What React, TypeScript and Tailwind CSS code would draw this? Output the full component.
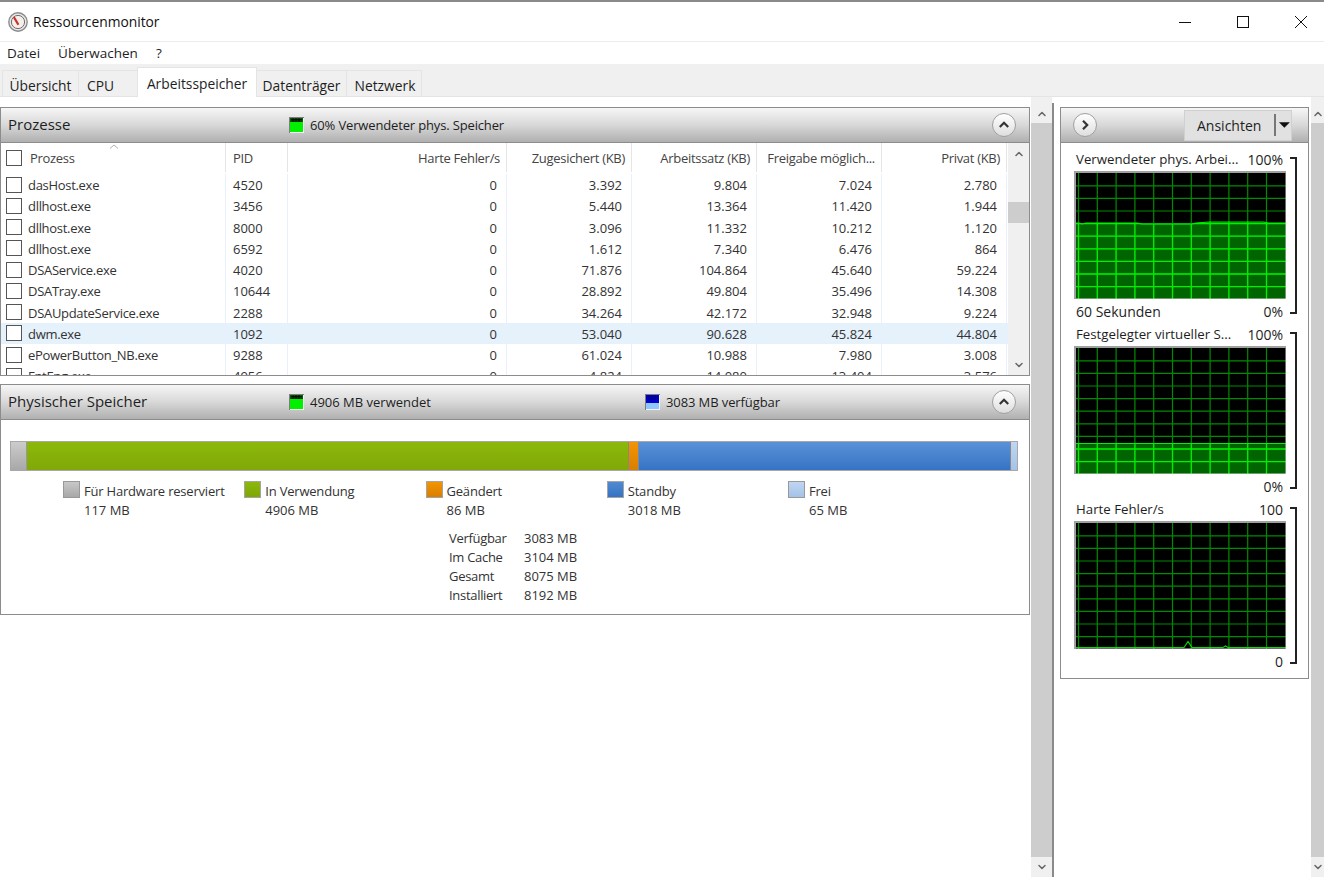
import { ChevronUp, ChevronDown } from 'lucide-react'

const rows = [
  ['dasHost.exe', '4520', '0', '3.392', '9.804', '7.024', '2.780'],
  ['dllhost.exe', '3456', '0', '5.440', '13.364', '11.420', '1.944'],
  ['dllhost.exe', '8000', '0', '3.096', '11.332', '10.212', '1.120'],
  ['dllhost.exe', '6592', '0', '1.612', '7.340', '6.476', '864'],
  ['DSAService.exe', '4020', '0', '71.876', '104.864', '45.640', '59.224'],
  ['DSATray.exe', '10644', '0', '28.892', '49.804', '35.496', '14.308'],
  ['DSAUpdateService.exe', '2288', '0', '34.264', '42.172', '32.948', '9.224'],
  ['dwm.exe', '1092', '0', '53.040', '90.628', '45.824', '44.804'],
  ['ePowerButton_NB.exe', '9288', '0', '61.024', '10.988', '7.980', '3.008'],
  ['FntEng.exe', '4956', '0', '4.824', '14.080', '13.404', '3.576'],
]

const legend = [
  ['Für Hardware reserviert', '117 MB', 'from-[#c8c8c8] to-[#a8a8a8]', 'border-[#999999]'],
  ['In Verwendung', '4906 MB', 'from-[#8cb80a] to-[#7ea606]', 'border-[#a5a5a5]'],
  ['Geändert', '86 MB', 'from-[#f49400] to-[#d87f00]', 'border-[#a5a5a5]'],
  ['Standby', '3018 MB', 'from-[#4f8ad2] to-[#3573c4]', 'border-[#a5a5a5]'],
  ['Frei', '65 MB', 'from-[#c0d6f2] to-[#a4c2e8]', 'border-[#999999]'],
]

const stats = [
  ['Verfügbar', '3083 MB'],
  ['Im Cache', '3104 MB'],
  ['Gesamt', '8075 MB'],
  ['Installiert', '8192 MB'],
]

function AppIcon() {
  return (
    <svg width="20" height="20" viewBox="0 0 20 20" className="shrink-0">
      <circle cx="10" cy="10" r="9.2" fill="#e8e8e8" stroke="#8c8c8c" strokeWidth="1.4" />
      <circle cx="10" cy="10" r="6.6" fill="#f7efe9" stroke="#6e6e6e" strokeWidth="1" />
      <path d="M5.8 5 L10.4 12.8" stroke="#c9302c" strokeWidth="2.2" />
    </svg>
  )
}

function Meter({ blue }: { blue?: boolean }) {
  return (
    <svg width="15" height="16" viewBox="0 0 15 16" className="shrink-0">
      <rect x="0" y="0" width="15" height="16" fill="#f4f4f4" />
      <rect x="0" y="0" width="1" height="16" fill="#7d7d7d" />
      <rect x="1" y="0" width="14" height="1" fill="#7d7d7d" />
      <rect x="1" y="1" width="13" height="14" fill={blue ? '#8cc8ff' : '#00f000'} />
      <rect x="1" y="1" width="13" height={blue ? 8 : 4} fill={blue ? '#0000c8' : '#0a5a0a'} />
      <path
        d={blue ? 'M2 3 H13 M2 5 H13 M4 1 V6 M7 1 V6 M10 1 V6' : 'M2 2.5 H13 M2 4 H13 M4 1 V5 M7 1 V5 M10 1 V5'}
        stroke={blue ? '#00007a' : '#000000'}
        strokeWidth="0.7"
      />
    </svg>
  )
}

function RoundButton({ dir }: { dir: 'up' | 'right' }) {
  return (
    <div className="w-[24px] h-[24px] rounded-full border border-[#a0a0a0] bg-gradient-to-b from-[#ffffff] to-[#dedede] flex items-center justify-center shrink-0">
      <svg width="12" height="12" viewBox="0 0 12 12">
        <path
          d={dir === 'up' ? 'M1.8 8 L6 3.8 L10.2 8' : 'M4 1.8 L8.2 6 L4 10.2'}
          fill="none"
          stroke="#333333"
          strokeWidth="2.2"
        />
      </svg>
    </div>
  )
}

function CheckBox() {
  return <div className="w-[16px] h-[16px] border border-[#555555] bg-white shrink-0" />
}

function Graph({ id, level, spikes }: { id: string; level?: string; spikes?: boolean }) {
  const w = 212
  const h = 128
  const vs = Array.from({ length: 11 }, (_, i) => 4.5 + i * 18.8)
  const hs = Array.from({ length: 9 }, (_, i) => 14.8 + i * 12.6)
  return (
    <svg width={w} height={h} viewBox={`0 0 ${w} ${h}`} className="block">
      <rect width={w} height={h} fill="#000000" />
      {level && <path d={`${level} L${w} ${h} L0 ${h} Z`} fill="#006400" />}
      {vs.map((x) => (
        <line key={x} x1={x} x2={x} y1={0} y2={h} stroke="#008c00" strokeWidth="1.2" />
      ))}
      {hs.map((y) => (
        <line key={y} x1={0} x2={w} y1={y} y2={y} stroke="#008c00" strokeWidth="1.2" />
      ))}
      {level && (
        <g>
          <clipPath id={id}>
            <path d={`${level} L${w} ${h} L0 ${h} Z`} />
          </clipPath>
          <g clipPath={`url(#${id})`}>
            {vs.map((x) => (
              <line key={x} x1={x} x2={x} y1={0} y2={h} stroke="#00f000" strokeWidth="1.3" />
            ))}
            {hs.map((y) => (
              <line key={y} x1={0} x2={w} y1={y} y2={y} stroke="#00f000" strokeWidth="1.3" />
            ))}
          </g>
          <path d={level} fill="none" stroke="#00f000" strokeWidth="1.2" />
        </g>
      )}
      {spikes && (
        <path
          d="M0 126.5 H110 L114 120.5 L118 126.5 H149 L151.5 125 L154 126.5 H212"
          fill="none"
          stroke="#00e000"
          strokeWidth="1.2"
        />
      )}
      <path d="M1 128 V1 H212" fill="none" stroke="#a0a0a0" strokeWidth="2" />
      <path d="M2 127.5 H212 M211.5 2 V128" fill="none" stroke="#d8d8d8" strokeWidth="1" opacity="0.5" />
    </svg>
  )
}

function ChartBlock({
  id,
  title,
  max,
  min,
  footer,
  level,
  spikes,
}: {
  id: string
  title: string
  max: string
  min: string
  footer?: string
  level?: string
  spikes?: boolean
}) {
  return (
    <div className="relative">
      <div className="h-[22px] flex justify-between items-center pl-[2px] pr-[3px] w-[212px] whitespace-nowrap">
        <span className="text-[13.25px]">{title}</span>
        <span className="text-[14px]">{max}</span>
      </div>
      <Graph id={id} level={level} spikes={spikes} />
      <div className="h-[25px] flex justify-between items-center text-[14px] pl-[2px] pr-[3px] w-[212px]">
        <span>{footer}</span>
        <span>{min}</span>
      </div>
      {/* bracket next to the chart */}
      <div className="absolute left-[216px] top-[8px] bottom-[10px] w-[7px] border-t-2 border-r-2 border-b-2 border-[#222222]" />
    </div>
  )
}

function PanelHeader({ children }: { children: React.ReactNode }) {
  return (
    <div className="h-[35px] shrink-0 relative flex items-center bg-gradient-to-b from-[#f6f6f6] via-[#d8d8d8] to-[#b0b0b0] border-b border-[#8c8c8c]">
      {children}
    </div>
  )
}

function Scrollbar({ wide }: { wide?: boolean }) {
  return (
    <div className={`${wide ? 'w-[21px]' : 'w-[13px]'} h-full flex flex-col bg-[#f0f0f0] shrink-0`}>
      <div className="h-[26px] flex items-end justify-center pb-[3px] shrink-0">
        <ChevronUp size={12} strokeWidth={3} color="#666666" />
      </div>
      <div className="flex-1 bg-[#cdcdcd]" />
      <div className="h-[20px] flex items-center justify-center shrink-0">
        <ChevronDown size={12} strokeWidth={3} color="#666666" />
      </div>
    </div>
  )
}

const colClass = [
  'w-[225px] border-r',
  'w-[62px] border-r',
  'w-[219px] border-r text-right',
  'w-[125px] border-r text-right',
  'w-[125px] border-r text-right',
  'w-[125px] border-r text-right',
  'w-[125px] border-r text-right',
]

const heads = ['Prozess', 'PID', 'Harte Fehler/s', 'Zugesichert (KB)', 'Arbeitssatz (KB)', 'Freigabe möglich...', 'Privat (KB)']

export default function App() {
  return (
    <div
      className="w-[1324px] h-[877px] overflow-hidden bg-white flex flex-col text-[#1e1e1e] text-[14px] leading-none"
      style={{ fontFamily: '"Open Sans", "Noto Sans", sans-serif' }}
    >
      <div className="h-[2px] bg-[#8a8a8a] shrink-0" />
      {/* title bar */}
      <div className="h-[40px] shrink-0 flex items-center pl-[8px] border-b border-[#ececec]">
        <AppIcon />
        <span className="ml-[5px] text-[13.8px] text-[#111111]">Ressourcenmonitor</span>
        <div className="ml-auto flex items-center">
          <svg width="58" height="16" viewBox="0 0 58 16"><path d="M23 8.5 H35" stroke="#111111" strokeWidth="1" /></svg>
          <svg width="58" height="16" viewBox="0 0 58 16"><rect x="23.5" y="2.5" width="11" height="11" fill="none" stroke="#111111" strokeWidth="1" /></svg>
          <svg width="52" height="16" viewBox="0 0 52 16"><path d="M23 2 L35 14 M35 2 L23 14" stroke="#111111" strokeWidth="1" /></svg>
        </div>
      </div>
      {/* menu */}
      <div className="h-[22px] pt-[2px] shrink-0 flex items-center pl-[7px] gap-[18px] text-[13.5px]">
        <span>Datei</span>
        <span>Überwachen</span>
        <span>?</span>
      </div>
      {/* tabs */}
      <div className="h-[33px] shrink-0 bg-[#f0f0f0] border-b border-[#e4e4e4] flex items-end pl-[2px] text-[13.8px]">
        <div className="w-[77px] h-[26px] pt-[5px] border border-b-0 border-[#e4e4e4] flex items-center justify-center">Übersicht</div>
        <div className="w-[58px] h-[26px] pt-[5px] border-t border-[#e4e4e4] flex items-center pl-[8px]">CPU</div>
        <div className="w-[120px] h-[30px] pt-[3px] bg-white border border-b-0 border-[#e4e4e4] flex items-center justify-center -mb-px">Arbeitsspeicher</div>
        <div className="w-[90px] h-[26px] pt-[5px] border-t border-r border-[#e4e4e4] flex items-center justify-center">Datenträger</div>
        <div className="w-[75px] h-[26px] pt-[5px] pl-[2px] border-t border-r border-[#e4e4e4] flex items-center justify-center">Netzwerk</div>
      </div>

      <div className="flex-1 flex min-h-0">
        {/* left column */}
        <div className="w-[1030px] pt-[10px] shrink-0 flex flex-col gap-[8px]">
          <div className="h-[269px] border border-[#8c8c8c] flex flex-col overflow-hidden">
            <PanelHeader>
              <span className="pl-[7px] pb-[2px] text-[15px] w-[288px] shrink-0">Prozesse</span>
              <Meter />
              <span className="ml-[6px] text-[13px] tracking-[-0.15px]">60% Verwendeter phys. Speicher</span>
              <div className="ml-auto mr-[13px]">
                <RoundButton dir="up" />
              </div>
            </PanelHeader>
            <div className="flex-1 flex min-h-0">
              <div className="flex-1 overflow-hidden min-w-0">
                <div className="h-[31px] pb-[2px] flex relative text-[13px] text-[#444444] tracking-[-0.3px]">
                  <svg width="10" height="5" viewBox="0 0 10 5" className="absolute left-[108px] top-[1px]">
                    <path d="M1 4.5 L5 1 L9 4.5" fill="none" stroke="#b0b0b0" strokeWidth="1" />
                  </svg>
                  {heads.map((h, i) => (
                    <div
                      key={h}
                      className={`${colClass[i]} border-[#e5e5e5] h-full flex items-center shrink-0 ${i > 1 ? 'justify-end pr-[6px]' : i === 1 ? 'pl-[7px]' : 'pl-[5px]'}`}
                    >
                      {i === 0 && <CheckBox />}
                      <span className={i === 0 ? 'ml-[8px] pt-[2px]' : 'pt-[2px]'}>{h}</span>
                    </div>
                  ))}
                </div>
                {rows.map((r, ri) => (
                  <div key={ri} className={`h-[21.25px] flex text-[13px] text-[#333333] ${ri === 7 ? 'bg-[#e5f1fb]' : ''}`}>
                    {r.map((c, i) => (
                      <div
                        key={i}
                        className={`${colClass[i]} border-[#e8f1fb] h-full flex items-center shrink-0 ${i > 1 ? 'justify-end pr-[9px]' : i === 1 ? 'pl-[7px]' : 'pl-[5px]'}`}
                      >
                        {i === 0 && <CheckBox />}
                        <span className={i === 0 ? 'ml-[6px] pt-[2px] tracking-[-0.3px]' : 'pt-[2px]'}>{c}</span>
                      </div>
                    ))}
                  </div>
                ))}
              </div>
              <div className="w-[21px] shrink-0 flex flex-col bg-[#f0f0f0]">
                <div className="h-[21px] flex items-center justify-center shrink-0">
                  <ChevronUp size={12} strokeWidth={3} color="#666666" />
                </div>
                <div className="flex-1 pt-[38px]">
                  <div className="h-[21px] bg-[#cdcdcd]" />
                </div>
                <div className="h-[21px] flex items-center justify-center shrink-0">
                  <ChevronDown size={12} strokeWidth={3} color="#666666" />
                </div>
              </div>
            </div>
          </div>

          <div className="h-[231px] border border-[#8c8c8c] flex flex-col">
            <PanelHeader>
              <span className="pl-[7px] pb-[2px] text-[15px] w-[288px] shrink-0">Physischer Speicher</span>
              <Meter />
              <span className="ml-[6px] w-[335px] text-[13px]">4906 MB verwendet</span>
              <Meter blue />
              <span className="ml-[6px] text-[13px] tracking-[-0.1px]">3083 MB verfügbar</span>
              <div className="ml-auto mr-[13px]">
                <RoundButton dir="up" />
              </div>
            </PanelHeader>
            <div className="pl-[9px] pt-[21px]">
              <div className="w-[1008px] h-[30px] border border-[#a8a8a8] flex bg-white">
                <div className="w-[16px] bg-gradient-to-b from-[#cccccc] to-[#a8a8a8] border-r border-[#999999]" />
                <div className="w-[601px] bg-gradient-to-b from-[#8cb80a] to-[#80a808]" />
                <div className="w-[10px] bg-gradient-to-b from-[#f49400] to-[#d87f00] border-l border-[#888888]" />
                <div className="flex-1 bg-gradient-to-b from-[#5a92d8] to-[#3573c4] border-l border-[#7a8a9a]" />
                <div className="w-[7px] bg-gradient-to-b from-[#c0d6f2] to-[#a4c2e8] border-l border-[#888888]" />
              </div>
              <div className="flex pl-[53px] pt-[10px]">
                {legend.map(([name, val, grad, border]) => (
                  <div key={name} className="w-[181.25px] flex gap-[4px] shrink-0">
                    <div className={`w-[17px] h-[17px] border ${border} bg-gradient-to-b ${grad} shrink-0`} />
                    <div className="flex flex-col mt-[1px] text-[13px] text-[#333333]">
                      <span className="h-[19px] flex items-center tracking-[-0.2px]">{name}</span>
                      <span className="h-[19px] flex items-center">{val}</span>
                    </div>
                  </div>
                ))}
              </div>
              <div className="pl-[439px] pt-[9px] text-[13px] text-[#333333]">
                {stats.map(([k, v]) => (
                  <div key={k} className="h-[19px] flex items-center">
                    <span className="w-[75px] tracking-[-0.3px]">{k}</span>
                    <span>{v}</span>
                  </div>
                ))}
              </div>
            </div>
          </div>
        </div>

        {/* outer scrollbar, left */}
        <div className="ml-[1px] h-full">
          <Scrollbar wide />
        </div>
        <div className="w-[2px] h-[774px] mt-[6px] bg-[#8a8a8a] shrink-0" />

        {/* right column */}
        <div className="w-[249px] ml-[6px] mt-[10px] h-[572px] border border-[#8c8c8c] flex flex-col shrink-0">
          <PanelHeader>
            <div className="ml-[12px]">
              <RoundButton dir="right" />
            </div>
            <div className="ml-auto mr-[16px] w-[108px] h-[31px] bg-[#e1e1e1] border border-[#d0d0d0] flex items-center pl-[12px]">
              <span className="pt-[2px]">Ansichten</span>
              <div className="ml-[13px] w-[2px] h-[22px] bg-[#777777]" />
              <svg width="14" height="8" viewBox="0 0 14 8" className="ml-[2px]">
                <path d="M1 1 H13 L7 7 Z" fill="#111111" />
              </svg>
            </div>
          </PanelHeader>
          <div className="pl-[13px] pt-[6px]">
            <ChartBlock
              id="g1"
              title="Verwendeter phys. Arbei..."
              max="100%"
              min="0%"
              footer="60 Sekunden"
              level="M0 52 L5 52 L8 53 L12 52 L63 52 L68 53 L118 53 L122 52 L135 51 L190 51 L194 52 L212 52"
            />
            <ChartBlock id="g2" title="Festgelegter virtueller S..." max="100%" min="0%" level="M0 97.5 L212 97.5" />
            <ChartBlock id="g3" title="Harte Fehler/s" max="100" min="0" spikes />
          </div>
        </div>

        {/* outer scrollbar, right */}
        <div className="ml-auto h-full">
          <Scrollbar />
        </div>
      </div>
    </div>
  )
}
